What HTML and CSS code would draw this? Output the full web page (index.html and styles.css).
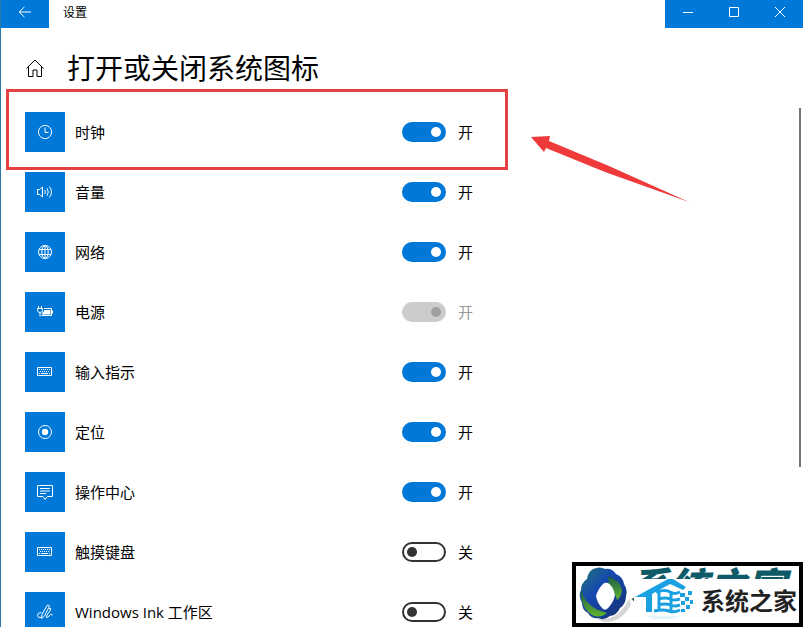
FILE: index.html
```
<!DOCTYPE html>
<html lang="zh-CN">
<head>
  <meta charset="UTF-8">
  <meta name="viewport" content="width=device-width, initial-scale=1.0">
  <title>设置</title>
  <link rel="stylesheet" href="styles.css">
</head>

<body>
  <div class="window">

    <header class="titlebar">
      <button type="button" class="titlebar-back" aria-label="返回">
        <svg width="14" height="12" viewBox="0 0 14 12"><path d="M6.5 .8L1.2 6l5.3 5.2M1.2 6H13"/></svg>
      </button>
      <span class="titlebar-text">设置</span>
      <div class="titlebar-controls">
        <button type="button" aria-label="最小化">
          <svg width="12" height="12" viewBox="0 0 12 12"><path d="M1 6.5h10"/></svg>
        </button>
        <button type="button" aria-label="最大化">
          <svg width="12" height="12" viewBox="0 0 12 12"><path d="M1.5 1.5h9v9h-9z"/></svg>
        </button>
        <button type="button" aria-label="关闭">
          <svg width="12" height="12" viewBox="0 0 12 12"><path d="M1 1l10 10M11 1L1 11"/></svg>
        </button>
      </div>
    </header>

    <div class="heading">
      <a href="#" class="heading-home" aria-label="主页">
        <svg width="20" height="20" viewBox="0 0 20 20"><path d="M1.500 10.500L10 2l8.500 8.500M3.500 9v9.500h4.500v-6.500h4v6.500h4.500V9"/></svg>
      </a>
      <h1 class="heading-title">打开或关闭系统图标</h1>
    </div>

    <main class="list">
      <div class="row">
        <span class="row-icon">
          <svg width="18" height="18" viewBox="0 0 18 18"><circle cx="9" cy="9" r="6.600"/><path d="M9 4.500v5h3.500"/></svg>
        </span>
        <label class="row-name" for="clock">时钟</label>
        <input type="checkbox" role="switch" class="toggle" id="clock" checked>
        <span class="row-state">开</span>
        <div class="mark-box"></div>
      </div>

      <div class="row">
        <span class="row-icon">
          <svg width="18" height="18" viewBox="0 0 18 18"><path d="M1.500 6.500h2L6.500 4v10l-3-2.500h-2zM8.800 7q1.200 2 0 4M11 5.300q2.600 3.700 0 7.400M13.300 3.600q4.400 5.400 0 10.800"/></svg>
        </span>
        <label class="row-name" for="volume">音量</label>
        <input type="checkbox" role="switch" class="toggle" id="volume" checked>
        <span class="row-state">开</span>
      </div>

      <div class="row">
        <span class="row-icon">
          <svg width="18" height="18" viewBox="0 0 18 18"><circle cx="9" cy="9" r="6.500"/><ellipse cx="9" cy="9" rx="3.200" ry="6.500"/><path d="M9 2.500v13M3.200 6.500h11.600M3.200 11.500h11.600"/></svg>
        </span>
        <label class="row-name" for="network">网络</label>
        <input type="checkbox" role="switch" class="toggle" id="network" checked>
        <span class="row-state">开</span>
      </div>

      <div class="row">
        <span class="row-icon">
          <svg width="18" height="18" viewBox="0 0 18 18"><path d="M2.500 3v2M5.500 3v2M1.500 5.500h5v2q0 2-2.500 2t-2.500-2zM4 9.500v4M8 5.500h7.500v7H5.500M16.500 7.500v3"/><path class="solid" d="M8 7h6.500v4.500H6V10l2-1.500z"/></svg>
        </span>
        <label class="row-name" for="power">电源</label>
        <input type="checkbox" role="switch" class="toggle" id="power" checked disabled>
        <span class="row-state row-state-disabled">开</span>
      </div>

      <div class="row">
        <span class="row-icon">
          <svg width="18" height="18" viewBox="0 0 18 18"><path d="M1.500 4.500h14v8h-14z"/><path stroke-dasharray="1 1" d="M3 6.500h11M4 8.500h10"/><path d="M3 10.500h1M5 10.500h7M13 10.500h1"/></svg>
        </span>
        <label class="row-name" for="input">输入指示</label>
        <input type="checkbox" role="switch" class="toggle" id="input" checked>
        <span class="row-state">开</span>
      </div>

      <div class="row">
        <span class="row-icon">
          <svg width="18" height="18" viewBox="0 0 18 18"><circle cx="9" cy="9" r="6.500"/><circle class="solid" cx="9" cy="9" r="3.200"/></svg>
        </span>
        <label class="row-name" for="location">定位</label>
        <input type="checkbox" role="switch" class="toggle" id="location" checked>
        <span class="row-state">开</span>
      </div>

      <div class="row">
        <span class="row-icon">
          <svg width="18" height="18" viewBox="0 0 18 18"><path d="M1.500 2.500h15v11h-5L9 16.500l-2-3H1.500zM4 5.500h10M4 8h10M4 10.500h6"/></svg>
        </span>
        <label class="row-name" for="action">操作中心</label>
        <input type="checkbox" role="switch" class="toggle" id="action" checked>
        <span class="row-state">开</span>
      </div>

      <div class="row">
        <span class="row-icon">
          <svg width="18" height="18" viewBox="0 0 18 18"><path d="M1.500 4.500h14v8h-14z"/><path stroke-dasharray="1 1" d="M3 6.500h11M4 8.500h10"/><path d="M3 10.500h1M5 10.500h7M13 10.500h1"/></svg>
        </span>
        <label class="row-name" for="keyboard">触摸键盘</label>
        <input type="checkbox" role="switch" class="toggle" id="keyboard">
        <span class="row-state">关</span>
      </div>

      <div class="row">
        <span class="row-icon">
          <svg width="18" height="18" viewBox="0 0 18 18"><path d="M5.500 9.500q-4 0-4 2.800t4 2.200M5.500 15.500l.5-4L11 2.500q1.500-1.500 2.500.5L8.500 13zM13 5.500q2.500-1 1.500 1.500L10.500 13q-.5 2.500 1.500 1l2.500-2.500q2-1 1.500 1"/></svg>
        </span>
        <label class="row-name" for="ink">Windows Ink 工作区</label>
        <input type="checkbox" role="switch" class="toggle" id="ink">
        <span class="row-state">关</span>
      </div>
    </main>

    <div class="scrollbar"></div>

    <svg class="mark-arrow" width="158" height="68" viewBox="0 0 158 68"><path d="M0 2l19-1-1 5 60 25 80 36-84-30L15 13l-2 4z"/></svg>

    <div class="badge">
      <svg class="badge-ring" width="56" height="56" viewBox="0 0 56 56">
        <defs>
          <linearGradient id="ring" x1="0" y1="0" x2="1" y2="1">
            <stop offset="0" stop-color="#1d7a70"/>
            <stop offset=".4" stop-color="#1748b0"/>
            <stop offset="1" stop-color="#15306e"/>
          </linearGradient>
          <linearGradient id="leaf" x1="0" y1="0" x2="0" y2="1">
            <stop offset="0" stop-color="#1c5a4c"/>
            <stop offset="1" stop-color="#62b32c"/>
          </linearGradient>
        </defs>
        <path fill="#999" opacity=".4" d="M17 51q22 6 35-19l2 5q-8 18-27 18z"/>
        <path fill="url(#ring)" d="M16 2q7-3 12 0 7-1 11 5 7 3 8 10 4 6 2 12 0 8-6 12-3 7-10 8-6 5-12 2-7 1-10-5-6-3-6-10-4-7-1-13 0-7 6-11 1-7 6-10z"/>
        <path fill="url(#leaf)" d="M31 9q12 4 14 14 0 6-5 10-2-9-8-14z"/>
        <path fill="url(#leaf)" d="M4 23q4 14 17 20l9 3q-7 6-15 2-12-8-11-25z"/>
        <path fill="#fff" d="M26 17q2-2 5-1 5 3 7 12-1 6-6 12-3 4-6 2-6-6-7-13 2-7 7-12z"/>
      </svg>
      <span class="badge-back">系统之家</span>
      <div class="badge-front">
        <svg width="62" height="44" viewBox="0 0 62 44">
          <g fill="#1ba1e2">
            <path d="M1 18L34 0h5l13 8-3 3-13-6-18 10v18h-6V18z"/>
            <path d="M46 14h5v4h-5zM54 12h4v4h-4zM51 18h4v4h-4zM47 22h4v4h-4zM56 21h3v4h-3zM52 26h4v4h-4zM47 30h4v3h-4z"/>
          </g>
          <path fill="none" stroke="#1ba1e2" stroke-width="3" d="M22 13q10-3 14 0t10 0M24 20q8-2 12 0t10 0M24 26q8-2 12 0t10 0M20 32q10-2 15 0t11-1M25 13v19M37 12v20"/>
          <path fill="#e3f4fb" d="M13 37h34l-8 3H19z"/>
        </svg>
        <span class="badge-text">系统之家</span>
      </div>
    </div>

  </div>
</body>

</html>
```

FILE: styles.css
```
* {
  box-sizing: border-box;
}

body {
  margin: 0;
  font-family: "Open Sans", "Noto Sans CJK SC", sans-serif;
  font-size: 15px;
  color: #000;
  background-color: #fff;
}

svg {
  display: block;
  fill: none;
  stroke: currentColor;
}

button {
  display: grid;
  place-items: center;
  padding: 0;
  border: none;
  color: #fff;
  background-color: #0078d7;
}

.window {
  position: relative;
  height: 100vh;
  overflow: hidden;
  border-left: 1px solid #2878a8;
}

/* title bar */
.titlebar {
  display: flex;
  height: 28px;
}

.titlebar-back {
  width: 48px;
  padding-bottom: 4px;
}

.titlebar-text {
  margin-left: 14px;
  font-size: 12px;
  line-height: 25px;
}

.titlebar-controls {
  display: flex;
  margin-left: auto;
}
.titlebar-controls button {
  width: 46px;
  padding-bottom: 4px;
}

/* heading */
.heading {
  display: flex;
  align-items: center;
  gap: 22px;
  height: 74px;
  padding: 6px 24px 0;
}

.heading-home {
  color: #000;
}

.heading-title {
  margin: 0;
  font-size: 28px;
  font-weight: normal;
  line-height: 40px;
}

/* icon list */
.list {
  padding: 0 24px;
}

.row {
  position: relative;
  display: grid;
  grid-template-columns: 40px minmax(0, 317px) 44px auto;
  justify-content: start;
  align-items: center;
  column-gap: 10px;
  height: 60px;
}

.row-icon {
  display: grid;
  place-items: center;
  height: 40px;
  padding-right: 1px;
  color: #fff;
  background-color: #0078d7;
}

.row-icon .solid {
  fill: currentColor;
  stroke: none;
}

.row-name,
.row-state {
  padding-bottom: 2px;
}

.row-state {
  padding-left: 2px;
}

.row-state-disabled {
  color: #999;
}

.toggle {
  appearance: none;
  display: flex;
  align-items: center;
  width: 44px;
  height: 20px;
  margin: 0;
  padding: 0 3px;
  border: 2px solid #333;
  border-radius: 10px;
  color: #333;
}
.toggle::before {
  content: "";
  width: 10px;
  height: 10px;
  border-radius: 50%;
  background-color: currentColor;
}
.toggle:checked {
  justify-content: flex-end;
  border-color: #0078d7;
  color: #fff;
  background-color: #0078d7;
}
.toggle:disabled {
  border-color: #ccc;
  color: #a0a0a0;
  background-color: #ccc;
}

.scrollbar {
  position: absolute;
  top: 108px;
  right: 2px;
  width: 2px;
  height: 359px;
  background-color: #767676;
}

/* red marks */
.mark-box {
  position: absolute;
  top: -13px;
  left: -19px;
  width: 502px;
  height: 81px;
  border: 3px solid #e54143;
  pointer-events: none;
}

.mark-arrow {
  position: absolute;
  top: 135px;
  left: 530px;
  fill: #ee3a3a;
  stroke: none;
}

/* site badge */
.badge {
  position: absolute;
  right: 0;
  bottom: 0;
  width: 231px;
  height: 65px;
  overflow: hidden;
  border: 4px solid #000;
  background-color: #fff;
}
.badge svg {
  stroke: none;
}

.badge-ring {
  position: absolute;
  top: 1px;
  left: 1px;
}

.badge-back {
  position: absolute;
  top: -2px;
  left: 54px;
  font-size: 39px;
  font-style: italic;
  font-weight: 900;
  line-height: 44px;
  white-space: nowrap;
  color: #0f5a68;
}

.badge-front {
  position: absolute;
  top: 13px;
  right: 0;
  display: flex;
  align-items: center;
  gap: 5px;
  width: 165px;
  height: 44px;
  background-color: #fff;
}

.badge-text {
  font-size: 24px;
  font-weight: bold;
  line-height: 44px;
  white-space: nowrap;
  color: #222;
}
```
